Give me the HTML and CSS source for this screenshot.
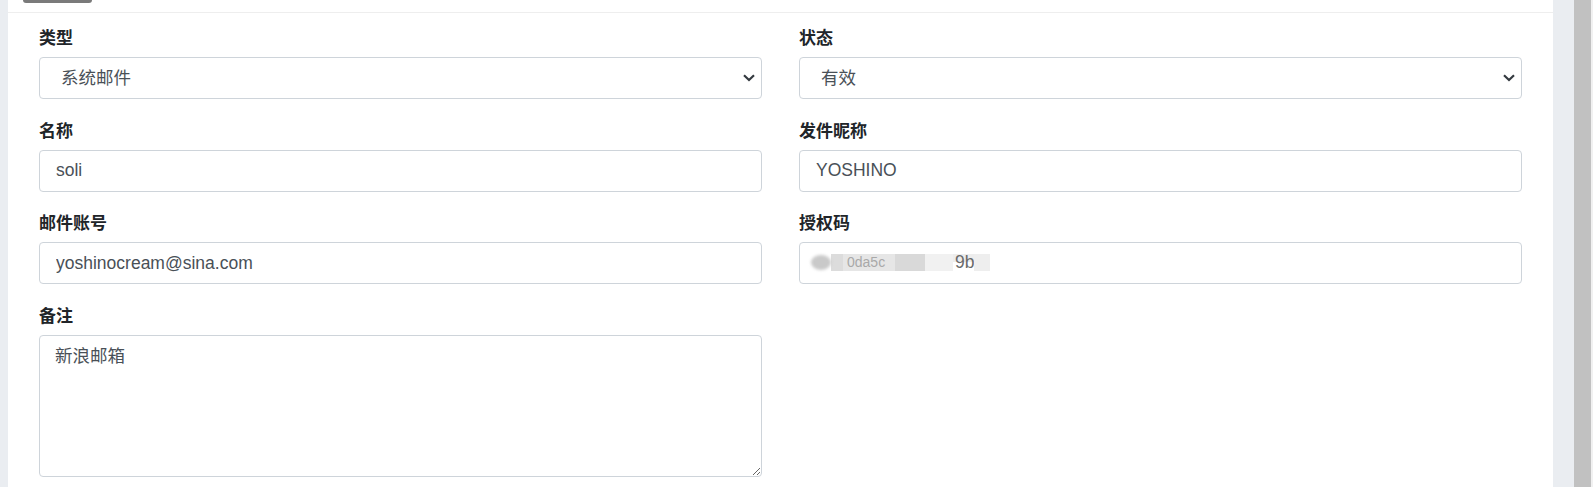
FILE: index.html
```html
<!DOCTYPE html>
<html lang="zh-CN">
<head>
<meta charset="utf-8">
<title>邮件配置</title>
<link rel="stylesheet" href="styles.css">
</head>
<body>
<div class="page">
  <div class="gutter-left"></div>
  <main class="panel">
    <div class="panel-top"><div class="btn-stub"></div></div>
    <form class="form">
      <div class="group">
        <label class="label">类型</label>
        <select class="control select"><option>系统邮件</option></select>
      </div>
      <div class="group">
        <label class="label">状态</label>
        <select class="control select"><option>有效</option></select>
      </div>
      <div class="group">
        <label class="label">名称</label>
        <input class="control" type="text" value="soli">
      </div>
      <div class="group">
        <label class="label">发件昵称</label>
        <input class="control" type="text" value="YOSHINO">
      </div>
      <div class="group">
        <label class="label">邮件账号</label>
        <input class="control" type="text" value="yoshinocream@sina.com">
      </div>
      <div class="group">
        <label class="label">授权码</label>
        <div class="masked">
          <input class="control" type="text" value="">
          <div class="redact">
            <span class="smudge"></span>
            <span class="blk b1"></span>
            <span class="blk b2"><span class="ghost">0da5c</span></span>
            <span class="blk b3"></span>
            <span class="blk b4"></span>
            <span class="tail">9b</span>
            <span class="blk b5"></span>
          </div>
        </div>
      </div>
      <div class="group">
        <label class="label">备注</label>
        <textarea class="control area">新浪邮箱</textarea>
      </div>
    </form>
  </main>
  <div class="gutter-right"></div>
  <div class="scrollbar"><div class="thumb"></div></div>
</div>
</body>
</html>
```

FILE: styles.css
```css
html, body {
  margin: 0;
  padding: 0;
  height: 487px;
  overflow: hidden;
  background: #eaedf1;
  font-family: "Liberation Sans", "Noto Sans CJK SC", sans-serif;
}

.page {
  display: flex;
  height: 487px;
}

.gutter-left {
  width: 8px;
  flex: none;
}

.gutter-right {
  width: 21px;
  flex: none;
}

.scrollbar {
  width: 19px;
  flex: none;
  background: #f1f1f1;
  display: flex;
}

.thumb {
  width: 17px;
  background: #c1c1c1;
}

.panel {
  flex: 1;
  background: #ffffff;
  display: flex;
  flex-direction: column;
}

.panel-top {
  height: 12px;
  border-bottom: 1px solid #eeeeee;
  padding-left: 15px;
}

.btn-stub {
  width: 69px;
  height: 3px;
  background: #7a7a7a;
  border-radius: 0 0 4px 4px;
}

.form {
  display: grid;
  grid-template-columns: 1fr 1fr;
  column-gap: 37px;
  row-gap: 16.5px;
  padding: 10px 31px 0 31px;
  align-items: start;
}

.group {
  display: flex;
  flex-direction: column;
}

.label {
  display: block;
  font-size: 17px;
  font-weight: 700;
  line-height: 26px;
  margin-top: 3px;
  margin-bottom: 5px;
  color: #212529;
}

.control {
  box-sizing: border-box;
  width: 100%;
  height: 42px;
  margin: 0;
  padding: 0 16px;
  border: 1px solid #ced4da;
  border-radius: 4px;
  background: #ffffff;
  color: #495057;
  font-family: "Liberation Sans", "Noto Sans CJK SC", sans-serif;
  font-size: 17.5px;
  line-height: 26px;
  outline: none;
}

.select {
  -webkit-appearance: none;
  appearance: none;
  padding-left: 21px;
  background-image: url("data:image/svg+xml;utf8,<svg xmlns='http://www.w3.org/2000/svg' width='12' height='8' viewBox='0 0 12 8'><path d='M1 1.2 L6 6 L11 1.2' fill='none' stroke='%23343a40' stroke-width='2.2'/></svg>");
  background-repeat: no-repeat;
  background-position: right 6px center;
  background-size: 12px 8px;
}

.area {
  height: 142px;
  padding: 7px 15px;
  resize: vertical;
}

.masked {
  position: relative;
}

.redact {
  position: absolute;
  left: 12px;
  top: 11px;
  height: 18px;
  display: flex;
  align-items: center;
}

.smudge {
  width: 20px;
  height: 15px;
  border-radius: 50%;
  background: #c9c9c9;
  filter: blur(1.5px);
}

.blk {
  height: 17px;
  display: block;
}

.b1 { width: 12px; background: #dcdcdc; }
.b2 {
  width: 52px;
  background: #e6e6e6;
  display: flex;
  align-items: center;
  padding-left: 4px;
  box-sizing: border-box;
}
.ghost {
  font-size: 14px;
  line-height: 17px;
  color: #a9a9a9;
}
.b3 { width: 30px; background: #d9d9d9; }
.b4 { width: 28px; background: #f1f1f1; }
.tail {
  font-size: 17.5px;
  line-height: 17px;
  color: #6a6a6a;
  padding-left: 2px;
  background: linear-gradient(#ededed 0 45%, transparent 45%);
}
.b5 { width: 16px; background: #eeeeee; }
```
